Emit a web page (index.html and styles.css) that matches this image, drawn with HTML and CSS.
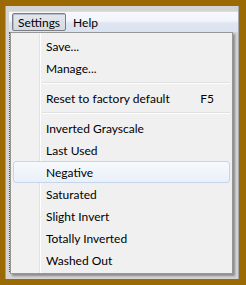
FILE: index.html
```html
<!DOCTYPE html>
<html lang="en">
<head>
    <meta charset="UTF-8">
    <meta name="viewport" content="width=device-width, initial-scale=1.0">
    <title>Settings Menu</title>
    <link rel="stylesheet" href="styles.css">
</head>
<body>
    <div class="screen">
        <div class="window">
            <div class="menubar">
                <span class="menu-title open">Settings</span>
                <span class="menu-title">Help</span>
            </div>
            <div class="content"></div>

            <!-- Dropdown for the Settings menu -->
            <div class="dropdown">
                <div class="item">Save...</div>
                <div class="item">Manage...</div>
                <div class="separator"></div>
                <div class="item"><span>Reset to factory default</span><span class="shortcut">F5</span></div>
                <div class="separator"></div>
                <div class="item">Inverted Grayscale</div>
                <div class="item">Last Used</div>
                <div class="item hover">Negative</div>
                <div class="item">Saturated</div>
                <div class="item">Slight Invert</div>
                <div class="item">Totally Inverted</div>
                <div class="item">Washed Out</div>
            </div>
        </div>
    </div>
</body>
</html>
```

FILE: styles.css
```css
body {
    margin: 0;
    font-family: Lato, sans-serif;
    font-size: 12px;
    color: #000;
}
.screen {
    width: 246px;
    height: 285px;
    box-sizing: border-box;
    padding: 6px 7px 6px 5px;
    background-color: #9b6a04;
}
.window {
    position: relative;
    height: 100%;
    box-sizing: border-box;
    padding: 5px 0 0 3px;
    background-color: #d4d4d4;
    border-left: 1px solid #a0a0a0;
    border-right: 1px solid #a8a8a8;
}
.menubar {
    display: flex;
    height: 21px;
    padding: 1px 0 0 3px;
    box-sizing: border-box;
    border-top: 1px solid #d8e0dc;
    background: linear-gradient(#f7f9fd, #f1f4fa 45%, #dfe5f2 55%, #dbe2f1);
}
.menu-title {
    height: 18px;
    line-height: 17px;
    padding: 0 5px 0 5px;
    margin-right: 1px;
    box-sizing: border-box;
    border: 1px solid transparent;
    white-space: nowrap;
}
.menu-title.open {
    border-color: #7b7e84;
    border-radius: 2px;
    background: linear-gradient(#e4e7ec, #d5dae2);
    box-shadow: inset 1px 1px 0 #b8bcc4;
}
.content {
    height: 240px;
    border-left: 1px dotted #555;
}
/* Dropdown menu */
.dropdown {
    position: absolute;
    left: 4px;
    top: 26px;
    width: 223px;
    box-sizing: border-box;
    padding: 2px;
    border: 1px solid #979797;
    background: linear-gradient(to right, #f1f1f1 28px, #e2e3e3 28px, #e2e3e3 29px, #fff 29px, #fff 30px, #f0f0f0 30px);
    box-shadow: 2px 2px 2px rgba(0, 0, 0, 0.35);
}
.item {
    display: flex;
    justify-content: space-between;
    height: 22px;
    line-height: 21px;
    padding: 0 15px 0 32px;
    box-sizing: border-box;
    border: 1px solid transparent;
    border-radius: 3px;
    white-space: nowrap;
}
.item.hover {
    border-color: #c4d5ec;
    background: linear-gradient(#f6f9fd, #eaf0f9);
}
.shortcut {
    margin-left: 20px;
}
.separator {
    height: 8px;
    margin-left: 29px;
    background: linear-gradient(transparent 3px, #e0e0e0 3px, #e0e0e0 4px, #fff 4px, #fff 5px, transparent 5px);
}
```
